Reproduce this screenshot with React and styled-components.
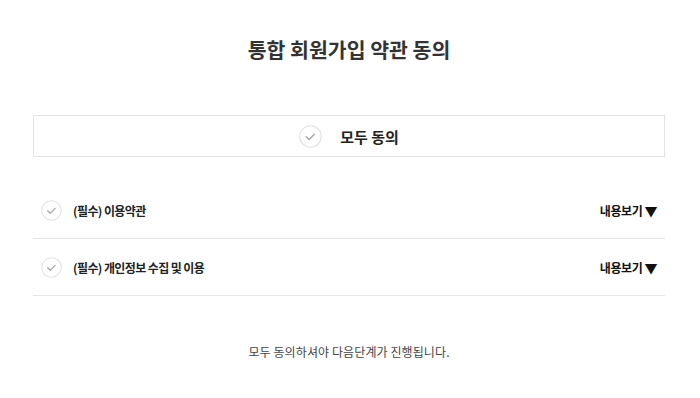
import React from "react";
import styled, { createGlobalStyle } from "styled-components";

const GlobalStyle = createGlobalStyle`
  body {
    margin: 0;
    background: #fff;
    font-family: "Noto Sans CJK KR", "Noto Sans", sans-serif;
    color: #222;
  }
`;

const Page = styled.div`
  width: 632px;
  margin: 0 35px 0 33px;
  padding-top: 33px;
`;

const Title = styled.h2`
  margin: 0;
  height: 32px;
  line-height: 32px;
  text-align: center;
  font-size: 20.5px;
  font-weight: 700;
  color: #333;
  letter-spacing: 0;
`;

const AllBox = styled.label`
  margin-top: 50px;
  height: 40px;
  border: 1px solid #e3e3e3;
  display: flex;
  justify-content: center;
  align-items: center;
  gap: 18px;
  font-size: 15px;
  font-weight: 700;
  color: #222;
  cursor: pointer;
`;

const Check = ({ size }) => (
  <svg width={size} height={size} viewBox="0 0 24 24">
    <circle cx="12" cy="12" r="11.2" fill="#fff" stroke="#e2e2e2" strokeWidth="1.2" />
    <path d="M7.6 12.2l3 3 5.6-5.6" fill="none" stroke="#aaa" strokeWidth="1.5" strokeLinecap="round" strokeLinejoin="round" />
  </svg>
);

const List = styled.div`
  margin-top: 25px;
`;

const Row = styled.div`
  height: 56px;
  border-bottom: 1px solid #e6e6e6;
  display: flex;
  align-items: center;
  padding: 0 8px 0 8px;
`;

const RowLabel = styled.span`
  flex: 1;
  margin-left: 11px;
  font-size: 12px;
  font-weight: 700;
  color: #222;
  letter-spacing: -0.6px;
`;

const More = styled.span`
  font-size: 12px;
  font-weight: 700;
  color: #111;
  letter-spacing: -0.4px;
  display: flex;
  align-items: center;
  gap: 2px;

  i {
    font-style: normal;
    font-size: 13px;
  }
`;

const Notice = styled.p`
  margin: 47px 0 0;
  text-align: center;
  font-size: 12px;
  color: #444;
  letter-spacing: 0.1px;
`;

const terms = ["(필수) 이용약관", "(필수) 개인정보 수집 및 이용"];

export default function App() {
  return (
    <>
      <GlobalStyle />
      <Page>
        <Title>통합 회원가입 약관 동의</Title>
        <AllBox>
          <Check size={23} />
          모두 동의
        </AllBox>
        <List>
          {terms.map((t) => (
            <Row key={t}>
              <Check size={21} />
              <RowLabel>{t}</RowLabel>
              <More>
                내용보기<i>▼</i>
              </More>
            </Row>
          ))}
        </List>
        <Notice>모두 동의하셔야 다음단계가 진행됩니다.</Notice>
      </Page>
    </>
  );
}
